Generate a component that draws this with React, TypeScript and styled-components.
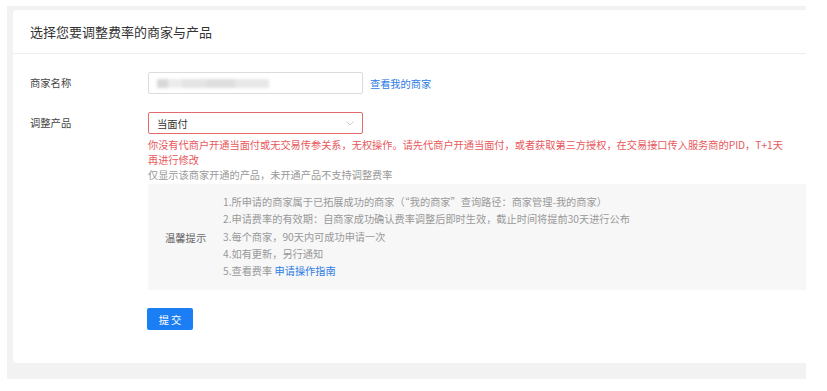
import styled, { createGlobalStyle } from "styled-components";

const GlobalStyle = createGlobalStyle`
  html, body {
    margin: 0;
    padding: 0;
    background: #fff;
  }
  body {
    font-family: "Noto Sans CJK SC", "Noto Sans", sans-serif;
    color: #333;
  }
`;

const Page = styled.div`
  width: 827px;
  height: 391px;
  padding: 6px 0 0 7px;
  box-sizing: border-box;
  overflow: hidden;
`;

const Shell = styled.div`
  width: 799px;
  background: #f2f2f2;
  padding: 4px 0 16px 6px;
  box-sizing: border-box;
`;

const Card = styled.div`
  background: #fff;
  border-radius: 4px 0 0 4px;
  height: 353px;
  overflow: hidden;
`;

const Header = styled.div`
  height: 43px;
  display: flex;
  align-items: center;
  padding-left: 17px;
  border-bottom: 1px solid #efefef;
  font-size: 13px;
  color: #333;
`;

const Body = styled.div`
  padding: 18px 0 0 17px;
  display: flex;
  flex-direction: column;
  gap: 18px;
`;

const Row = styled.div`
  display: flex;
  align-items: flex-start;
`;

const Label = styled.div`
  width: 118px;
  flex: none;
  font-size: 10.3px;
  line-height: 22px;
  color: #444;
`;

const Field = styled.div`
  flex: 1;
  min-width: 0;
  display: flex;
  flex-direction: column;
`;

const Inline = styled.div`
  display: flex;
  align-items: center;
  gap: 7px;
`;

const Input = styled.div`
  width: 215px;
  height: 22px;
  box-sizing: border-box;
  border: 1px solid #dcdcdc;
  border-radius: 2px;
  display: flex;
  align-items: center;
  padding-left: 8px;
`;

const Blur = styled.div`
  width: 112px;
  height: 9px;
  background: linear-gradient(
    90deg,
    #d8d8d8 0 10%,
    #ececec 10% 22%,
    #e4e4e4 22% 45%,
    #dedede 45% 70%,
    #e8e8e8 70% 100%
  );
  filter: blur(1.5px);
`;

const Link = styled.a`
  color: #2d7be5;
  font-size: 10.2px;
  text-decoration: none;
  cursor: pointer;
`;

const Select = styled.div<{ $error?: boolean }>`
  width: 215px;
  height: 22px;
  box-sizing: border-box;
  border: 1px solid ${(p) => (p.$error ? "#e26a6a" : "#dcdcdc")};
  border-radius: 2px;
  display: flex;
  align-items: center;
  justify-content: space-between;
  padding: 0 8px 0 8px;
  font-size: 10.3px;
  color: #333;
`;

const Note = styled.div<{ $tone: "error" | "muted" }>`
  font-size: 10.2px;
  line-height: 15px;
  color: ${(p) => (p.$tone === "error" ? "#e8585c" : "#999")};
  padding-right: 18px;
`;

const Notes = styled.div`
  margin-top: 3px;
`;

const Tips = styled.div`
  margin-top: 2px;
  background: #f7f7f7;
  height: 106px;
  box-sizing: border-box;
  padding: 9px 0 0 17px;
  display: flex;
  align-items: center;
`;

const TipsLabel = styled.div`
  width: 58px;
  flex: none;
  font-size: 10.3px;
  color: #666;
  align-self: center;
  margin-top: -9px;
`;

const TipsList = styled.ol`
  list-style: none;
  margin: 0;
  padding: 0;
  align-self: flex-start;
`;

const Tip = styled.li`
  font-size: 10.2px;
  line-height: 17.3px;
  color: #999;
`;

const Button = styled.button`
  width: 46px;
  height: 22px;
  margin-left: 117px;
  border: none;
  border-radius: 2px;
  background: #1b7ef4;
  color: #fff;
  font-family: inherit;
  font-size: 10.3px;
  letter-spacing: 2px;
  padding: 0 0 0 2px;
  cursor: pointer;
`;

const Chevron = () => (
  <svg width="8" height="5" viewBox="0 0 8 5" fill="none">
    <path d="M0.5 0.5 L4 4 L7.5 0.5" stroke="#bcbcbc" strokeWidth="0.8" />
  </svg>
);

const tips = [
  "1.所申请的商家属于已拓展成功的商家（“我的商家”查询路径：商家管理-我的商家）",
  "2.申请费率的有效期：自商家成功确认费率调整后即时生效，截止时间将提前30天进行公布",
  "3.每个商家，90天内可成功申请一次",
  "4.如有更新，另行通知",
];

const App = () => {
  return (
    <Page>
      <GlobalStyle />
      <Shell>
        <Card>
          <Header>选择您要调整费率的商家与产品</Header>
          <Body>
            <Row>
              <Label>商家名称</Label>
              <Inline>
                <Input>
                  <Blur />
                </Input>
                <Link>查看我的商家</Link>
              </Inline>
            </Row>
            <Row>
              <Label>调整产品</Label>
              <Field>
                <Select $error>
                  <span>当面付</span>
                  <Chevron />
                </Select>
                <Notes>
                  <Note $tone="error">
                    你没有代商户开通当面付或无交易传参关系，无权操作。请先代商户开通当面付，或者获取第三方授权，在交易接口传入服务商的PID，T+1天再进行修改
                  </Note>
                  <Note $tone="muted">仅显示该商家开通的产品，未开通产品不支持调整费率</Note>
                </Notes>
                <Tips>
                  <TipsLabel>温馨提示</TipsLabel>
                  <TipsList>
                    {tips.map((t) => (
                      <Tip key={t}>{t}</Tip>
                    ))}
                    <Tip>
                      5.查看费率 <Link>申请操作指南</Link>
                    </Tip>
                  </TipsList>
                </Tips>
              </Field>
            </Row>
            <Button>提交</Button>
          </Body>
        </Card>
      </Shell>
    </Page>
  );
};

export default App;
